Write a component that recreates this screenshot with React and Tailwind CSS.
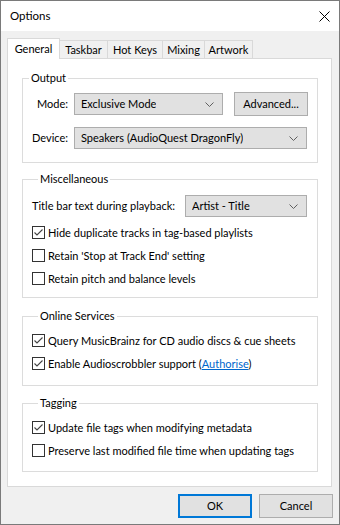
import React from 'react';

const Chevron = () => (
  <svg width="9" height="5" viewBox="0 0 9 5" className="shrink-0">
    <path d="M0.5 0.5 L4.5 4.5 L8.5 0.5" fill="none" stroke="#606060" strokeWidth="1" />
  </svg>
);

const Combo = ({ value, className }) => (
  <div className={`h-[22px] flex items-center justify-between pl-[6px] pr-[8px] bg-[#e1e1e1] border border-[#adadad] ${className}`}>
    <span className="truncate">{value}</span>
    <Chevron />
  </div>
);

const Checkbox = ({ checked, children }) => (
  <div className="h-[23px] flex items-center">
    <div className="w-[13px] h-[13px] border border-[#333333] bg-white flex items-center justify-center shrink-0">
      {checked && (
        <svg width="11" height="11" viewBox="0 0 11 11">
          <path d="M1.5 5.5 L4 8 L9.5 2.5" fill="none" stroke="#444444" strokeWidth="1.1" />
        </svg>
      )}
    </div>
    <span className="ml-[3px]">{children}</span>
  </div>
);

const Group = ({ title, className, children }) => (
  <fieldset className={`w-[296px] border border-[#dcdcdc] ${className}`}>
    <legend className="ml-[6px] px-[2px] leading-[16px]">{title}</legend>
    {children}
  </fieldset>
);

const Button = ({ children, primary, className = '' }) => (
  <div
    className={`w-[74px] h-[24px] flex items-center justify-center bg-[#e1e1e1] shrink-0 ${
      primary ? 'border-2 border-[#0078d7]' : 'border border-[#adadad]'
    } ${className}`}
  >
    {children}
  </div>
);

const tabs = [
  { name: 'Taskbar', w: 'w-[48px]' },
  { name: 'Hot Keys', w: 'w-[55px]' },
  { name: 'Mixing', w: 'w-[42px]' },
  { name: 'Artwork', w: 'w-[48px]' },
];

export default function App() {
  return (
    <div className="w-[340px] h-[525px] border border-[#7a7a7a] bg-[#f0f0f0] flex flex-col text-[11px] text-black font-['Lato',sans-serif] leading-[16px] whitespace-nowrap">
      {/* Title bar */}
      <div className="h-[30px] bg-white flex items-center justify-between pl-[9px] pr-[9px] shrink-0">
        <span className="text-[11.5px]">Options</span>
        <svg width="11" height="11" viewBox="0 0 11 11">
          <path d="M0.5 0.5 L10.5 10.5 M10.5 0.5 L0.5 10.5" stroke="#000" strokeWidth="1" />
        </svg>
      </div>

      <div className="pt-[7px] pl-[6px] flex flex-col">
        {/* Tabs */}
        <div className="flex items-end h-[21px] -mb-[1px] relative z-10">
          <div className="w-[53px] h-[21px] border border-b-0 border-[#d9d9d9] bg-white flex items-center justify-center">
            General
          </div>
          {tabs.map((t) => (
            <div
              key={t.name}
              className={`${t.w} h-[18px] mb-[1px] border-t border-r border-[#d9d9d9] bg-[#f0f0f0] flex items-center justify-center pt-[1px]`}
            >
              {t.name}
            </div>
          ))}
        </div>

        {/* Panel */}
        <div className="w-[325px] h-[429px] border border-[#d9d9d9] bg-white pt-[11px] pl-[14px] flex flex-col">
          <Group title="Output" className="pt-[7px] pb-[13px]">
            <div className="flex items-center h-[22px]">
              <span className="w-[45px] text-right">Mode:</span>
              <Combo value="Exclusive Mode" className="ml-[6px] w-[149px]" />
              <Button className="ml-[11px] w-[73px] h-[22px]">Advanced...</Button>
            </div>
            <div className="flex items-center h-[22px] mt-[12px]">
              <span className="w-[45px] text-right">Device:</span>
              <Combo value="Speakers (AudioQuest DragonFly)" className="ml-[6px] w-[233px]" />
            </div>
          </Group>

          <Group title="Miscellaneous" className="mt-[8px] pt-[8px] pb-[7px] pl-[9px] pr-[10px]">
            <div className="flex items-center justify-between h-[22px]">
              <span>Title bar text during playback:</span>
              <Combo value="Artist - Title" className="w-[122px]" />
            </div>
            <div className="mt-[4px]">
              <Checkbox checked>Hide duplicate tracks in tag-based playlists</Checkbox>
              <Checkbox>Retain 'Stop at Track End' setting</Checkbox>
              <Checkbox>Retain pitch and balance levels</Checkbox>
            </div>
          </Group>

          <Group title="Online Services" className="mt-[10px] pt-[5px] pb-[10px] pl-[9px]">
            <Checkbox checked>Query MusicBrainz for CD audio discs &amp; cue sheets</Checkbox>
            <Checkbox checked>
              Enable Audioscrobbler support (<span className="text-[#0066cc] underline">Authorise</span>)
            </Checkbox>
          </Group>

          <Group title="Tagging" className="mt-[9px] pt-[5px] pb-[9px] pl-[9px]">
            <Checkbox checked>Update file tags when modifying metadata</Checkbox>
            <Checkbox>Preserve last modified file time when updating tags</Checkbox>
          </Group>
        </div>
      </div>

      {/* Buttons */}
      <div className="flex justify-end gap-[7px] pt-[7px] pr-[6px]">
        <Button primary>OK</Button>
        <Button>Cancel</Button>
      </div>
    </div>
  );
}
